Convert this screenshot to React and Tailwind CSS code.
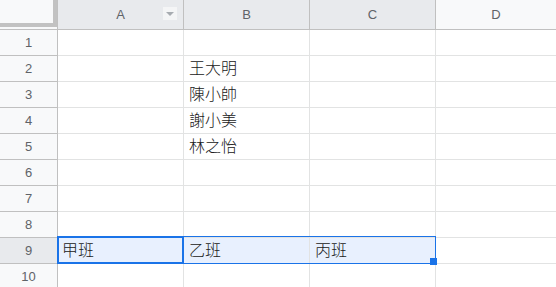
import React from 'react';

const FONT = 'font-["Liberation_Sans","Noto_Sans_CJK_TC",sans-serif]';

const data = {
  2: { B: '王大明' },
  3: { B: '陳小帥' },
  4: { B: '謝小美' },
  5: { B: '林之怡' },
  9: { A: '甲班', B: '乙班', C: '丙班' },
};

const selCols = ['A', 'B', 'C'];

function ColHeader({ label, selected, menu }) {
  return (
    <div
      className={`relative w-[126px] shrink-0 h-full flex items-center justify-center border-r border-[#c0c0c0] text-[13px] text-[#5f6368] ${
        selected ? 'bg-[#e8eaed]' : 'bg-[#f8f9fa]'
      }`}
    >
      {label}
      {menu && (
        <div className="absolute left-[105px] top-[7px] w-[14px] h-[13px] bg-[#f4f5f6] flex items-center justify-center">
          <svg width="8" height="4" viewBox="0 0 8 4">
            <path d="M0 0 L8 0 L4 4 Z" fill="#a7acb1" />
          </svg>
        </div>
      )}
    </div>
  );
}

function Row({ n }) {
  const row = data[n] || {};
  const isSel = n === 9;
  return (
    <div className="flex h-[26px] shrink-0">
      <div
        className={`w-[58px] shrink-0 flex items-center justify-center border-r border-b border-[#c0c0c0] text-[13px] text-[#5f6368] ${
          isSel ? 'bg-[#e8eaed]' : 'bg-[#f8f9fa]'
        }`}
      >
        {n}
      </div>
      {['A', 'B', 'C'].map(c => (
        <div
          key={c}
          className={`w-[126px] shrink-0 flex items-center border-r border-b border-[#e2e3e3] text-[16px] font-light text-[#202020] ${
            c === 'A' ? 'pl-[4px]' : 'pl-[5px]'
          } ${isSel && selCols.includes(c) ? 'bg-[#e8f0fe]' : 'bg-white'}`}
        >
          {row[c]}
        </div>
      ))}
      <div className="flex-1 border-b border-[#e2e3e3] bg-white" />
    </div>
  );
}

export default function App() {
  return (
    <div className={`relative w-[556px] h-[287px] overflow-hidden bg-white ${FONT}`}>
      <div className="flex h-[30px] border-b border-[#c0c0c0]">
        <div className="w-[58px] shrink-0 h-full border-r border-[#c0c0c0] bg-[#f8f9fa] pb-[2px]">
          <div className="h-full border-r-4 border-b-4 border-[#c2c2c2]" />
        </div>
        <ColHeader label="A" selected menu />
        <ColHeader label="B" selected />
        <ColHeader label="C" selected />
        <div className="flex-1 h-full flex items-center justify-center bg-[#f8f9fa] text-[13px] text-[#5f6368]">
          D
        </div>
      </div>
      {Array.from({ length: 10 }, (_, i) => (
        <Row key={i} n={i + 1} />
      ))}

      {/* selection range A9:C9 */}
      <div className="absolute left-[57px] top-[236px] w-[379px] h-[28px] border border-[#1a73e8] pointer-events-none" />
      {/* active cell */}
      <div className="absolute left-[57px] top-[236px] w-[127px] h-[28px] border-2 border-[#1a73e8] pointer-events-none" />
      {/* fill handle */}
      <div className="absolute left-[430px] top-[258px] w-[7px] h-[7px] bg-[#1a73e8] pointer-events-none" />
    </div>
  );
}
